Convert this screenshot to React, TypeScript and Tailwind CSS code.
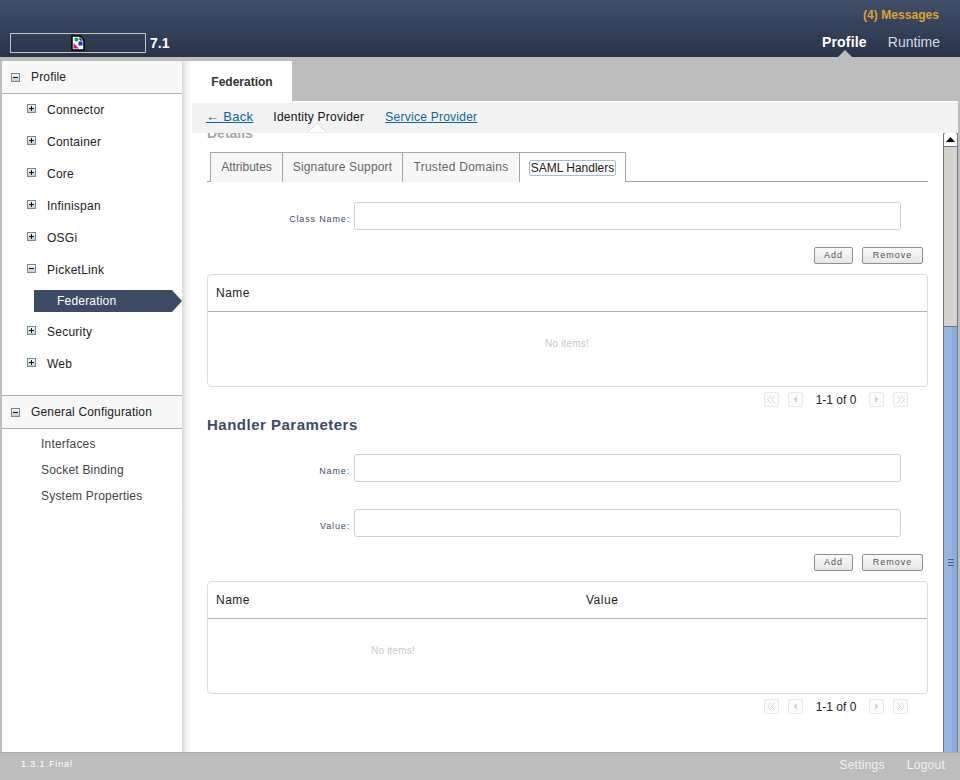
import React from "react";

function TreeIcon({ open, cls }: { open?: boolean; cls?: string }) {
  return (
    <svg width="9" height="9" viewBox="0 0 9 9" className={cls} shapeRendering="crispEdges">
      <defs>
        <linearGradient id="tg" x1="0" y1="0" x2="0" y2="1">
          <stop offset="0" stopColor="#f8f8f8" />
          <stop offset="1" stopColor="#d8c8b0" />
        </linearGradient>
      </defs>
      <rect x="0.5" y="0.5" width="8" height="8" fill="url(#tg)" stroke="#5f93ad" />
      <rect x="2" y="4" width="5" height="1" fill="#111" />
      {!open && <rect x="4" y="2" width="1" height="5" fill="#111" />}
    </svg>
  );
}

function TreeRow({ label, open }: { label: string; open?: boolean }) {
  return (
    <div className="flex h-[32px] items-center pl-[25px]">
      <TreeIcon open={open} cls="mb-[3px]" />
      <span className="ml-[11px] text-[12px] tracking-[0.25px] text-[#222]">{label}</span>
    </div>
  );
}

function SideHeader({ label, cls }: { label: string; cls?: string }) {
  return (
    <div className={"flex h-[33px] items-center bg-[#f7f7f7] border-b border-[#aeaeb4] pl-[9px] " + (cls ?? "")}>
      <TreeIcon open />
      <span className="ml-[11px] text-[12px] tracking-[0.17px] text-[#222]">{label}</span>
    </div>
  );
}

function Sidebar() {
  return (
    <div className="w-[180px] shrink-0 bg-white flex flex-col">
      <SideHeader label="Profile" />
      <div>
        <TreeRow label="Connector" />
        <TreeRow label="Container" />
        <TreeRow label="Core" />
        <TreeRow label="Infinispan" />
        <TreeRow label="OSGi" />
        <TreeRow label="PicketLink" open />
        <div className="h-[22px] w-[148px] ml-[32px] mt-[4px] mb-[4px] flex items-center pl-[23px] bg-[#3c4c66] text-white text-[12px] tracking-[0.2px] [clip-path:polygon(0_0,138px_0,148px_50%,138px_100%,0_100%)]">
          Federation
        </div>
        <TreeRow label="Security" />
        <TreeRow label="Web" />
      </div>
      <div className="mt-[15px] border-t border-[#aeaeb4]">
        <SideHeader label="General Configuration" />
      </div>
      <div className="pt-[2px] pl-[39px] text-[12px] tracking-[0.2px] text-[#444]">
        <div className="h-[26px] flex items-center">Interfaces</div>
        <div className="h-[26px] flex items-center">Socket Binding</div>
        <div className="h-[26px] flex items-center">System Properties</div>
      </div>
    </div>
  );
}

function ActionButtons() {
  return (
    <div className="flex justify-end gap-[9px] pr-[5px]">
      <button className="h-[17px] w-[39px] rounded-[2px] border border-[#8f8f8f] bg-gradient-to-b from-[#fafafa] to-[#e6e6e6] text-[9px] tracking-[1px] text-[#555]">Add</button>
      <button className="h-[17px] w-[61px] rounded-[2px] border border-[#8f8f8f] bg-gradient-to-b from-[#fafafa] to-[#e6e6e6] text-[9px] tracking-[1px] text-[#555]">Remove</button>
    </div>
  );
}

function Field({ label, cls }: { label: string; cls?: string }) {
  return (
    <div className={"flex items-center " + (cls ?? "")}>
      <div className="w-[143px] pt-[7px] text-right text-[9px] tracking-[0.85px] text-[#3c4c66]">{label}</div>
      <div className="ml-[4px] h-[28px] w-[547px] rounded-[3px] border border-[#cfcfcf] bg-white" />
    </div>
  );
}

function PagerBtn({ d }: { d: "first" | "prev" | "next" | "last" }) {
  return (
    <div className="h-[15px] w-[15px] rounded-[2px] border border-[#e8e8e8] bg-[#fbfbfb] flex items-center justify-center">
      <svg width="11" height="9" viewBox="0 0 11 9" fill="none">
        {d === "prev" && <path d="M7 1 L3.5 4.5 L7 8 Z" fill="#d4d4d4" />}
        {d === "next" && <path d="M4 1 L7.5 4.5 L4 8 Z" fill="#d4d4d4" />}
        {d === "first" && <path d="M5 1 L1.5 4.5 L5 8 M9 1 L5.5 4.5 L9 8" stroke="#d4d4d4" />}
        {d === "last" && <path d="M2 1 L5.5 4.5 L2 8 M6 1 L9.5 4.5 L6 8" stroke="#d4d4d4" />}
      </svg>
    </div>
  );
}

function Pager({ cls }: { cls?: string }) {
  return (
    <div className={"flex items-center h-[15px] pl-[557px] " + (cls ?? "")}>
      <PagerBtn d="first" />
      <div className="w-[9px]" />
      <PagerBtn d="prev" />
      <div className="w-[66px] text-center text-[12px] text-[#222]">1-1 of 0</div>
      <PagerBtn d="next" />
      <div className="w-[9px]" />
      <PagerBtn d="last" />
    </div>
  );
}

function DataTable({ children, emptyCls }: { children: React.ReactNode; emptyCls: string }) {
  return (
    <div className="h-[113px] w-[721px] rounded-[4px] border border-[#dedede] bg-white flex flex-col">
      <div className="h-[37px] border-b border-[#b0b0b0] flex items-center text-[12px] tracking-[0.5px] text-[#222] shrink-0">{children}</div>
      <div className={"flex-1 flex items-center pb-[12px] text-[10px] tracking-[0.2px] text-[#c8c8c8] " + emptyCls}>No items!</div>
    </div>
  );
}

function Scrollbar() {
  return (
    <div className="w-[15px] shrink-0 -mt-[1px] flex flex-col border-x border-[#6f7784] rounded-t-[3px] bg-[#94b6e3]">
      <div className="h-[15px] shrink-0 -mx-[1px] bg-white rounded-t-[3px] border border-[#6f7784] flex items-center justify-center">
        <svg width="9" height="5" viewBox="0 0 9 5"><path d="M4.5 0 L9 5 L0 5 Z" fill="#000" /></svg>
      </div>
      <div className="h-[180px] shrink-0 bg-[#d6d3cf] border-b border-[#6f7784]" />
      <div className="flex-1 flex items-center justify-center bg-gradient-to-r from-[#94b6e3] from-60% to-[#8bacdb] to-60%">
        <div className="mt-[45px] flex flex-col gap-[2px]">
          <div className="h-[1px] w-[6px] bg-[#4d5d78]" />
          <div className="h-[1px] w-[6px] bg-[#4d5d78]" />
          <div className="h-[1px] w-[6px] bg-[#4d5d78]" />
        </div>
      </div>
    </div>
  );
}

const inactiveTab = "h-[30px] bg-[#f7f7f7] border border-[#a5a5ad] border-b-0 flex items-center justify-center pb-[1px] text-[12px] text-[#666]";

function Content() {
  return (
    <div className="flex-1 min-w-0 overflow-hidden pl-[15px]">
      <div className="text-[14px] font-bold text-[#a8a8a8] h-[19px] -mt-[8px] leading-[16px]">Details</div>
      <div className="flex h-[30px] w-[721px] border-b border-[#a5a5ad] mt-[8px]">
        <div className={"ml-[3px] w-[73px] " + inactiveTab}>Attributes</div>
        <div className={"-ml-[1px] w-[121px] tracking-[0.16px] " + inactiveTab}>Signature Support</div>
        <div className={"-ml-[1px] w-[118px] tracking-[0.27px] " + inactiveTab}>Trusted Domains</div>
        <div className="-ml-[1px] h-[30px] w-[107px] bg-white border border-[#a5a5ad] border-b-0 flex items-center justify-center relative z-10">
          <span className="rounded-[2px] border border-[#a9bcd6] text-[12px] leading-[14px] text-[#222] px-[1px]">SAML Handlers</span>
        </div>
      </div>
      <Field label="Class Name:" cls="mt-[20px]" />
      <div className="mt-[17px] w-[721px]"><ActionButtons /></div>
      <div className="mt-[10px]">
        <DataTable emptyCls="justify-center pr-[1px]">
          <span className="ml-[8px]">Name</span>
        </DataTable>
      </div>
      <Pager cls="mt-[5px]" />
      <div className="mt-[8px] text-[15px] leading-[20px] tracking-[0.5px] font-bold text-[#3c4c66]">Handler Parameters</div>
      <Field label="Name:" cls="mt-[19px]" />
      <Field label="Value:" cls="mt-[27px]" />
      <div className="mt-[17px] w-[721px]"><ActionButtons /></div>
      <div className="mt-[10px]">
        <DataTable emptyCls="pl-[163px]">
          <span className="ml-[8px] w-[370px]">Name</span>
          <span>Value</span>
        </DataTable>
      </div>
      <Pager cls="mt-[5px]" />
    </div>
  );
}

export default function App() {
  return (
    <div className="relative h-[780px] w-[960px] overflow-hidden bg-[#bdbdbd] flex flex-col font-['Liberation_Sans',Arial,sans-serif]">
      <header className="h-[57px] shrink-0 bg-gradient-to-b from-[#414f6b] to-[#29344a] relative">
        <div className="flex justify-end pt-[8px] pr-[21px] text-[12px] tracking-[0.05px] font-bold text-[#dfa12e] leading-[15px]">(4) Messages</div>
        <div className="flex items-center justify-between pl-[10px] pr-[20px] mt-[10px] h-[20px]">
          <div className="flex items-center">
            <div className="h-[20px] w-[136px] border border-[#c4c4c4] flex items-center justify-center">
              <svg width="14" height="16" viewBox="0 0 14 16">
                <path d="M1 1 H9 L13 5 V15 H1 Z" fill="#fff" stroke="#000" strokeWidth="1.5" />
                <path d="M9 1 V5 H13 Z" fill="#c8c8c8" stroke="#000" />
                <circle cx="5.5" cy="4.5" r="2" fill="#00a040" />
                <rect x="7.5" y="6.5" width="4" height="4" fill="#1a2ae0" />
                <path d="M2.5 13.5 V8 L8 13.5 Z" fill="#e000a0" />
              </svg>
            </div>
            <span className="ml-[4px] text-[14px] font-bold text-white">7.1</span>
          </div>
          <div className="flex items-center gap-[21px] text-[14px] pb-[2px]">
            <span className="font-bold tracking-[0.2px] text-white">Profile</span>
            <span className="text-[#d6dae2]">Runtime</span>
          </div>
        </div>
        <div className="absolute left-[838px] bottom-0 h-0 w-0 border-x-[7px] border-b-[7px] border-x-transparent border-b-[#bdbdbd]" />
      </header>
      <div className="flex flex-1 min-h-0 pt-[4px] pl-[2px] pr-[2px]">
        <Sidebar />
        <div className="w-[10px] shrink-0 bg-gradient-to-r from-[#d9d9d9] via-[#f4f4f4] to-white" />
        <div className="flex-1 min-w-0 flex flex-col">
          <div className="h-[40px] shrink-0 flex">
            <div className="w-[100px] bg-white flex items-center justify-center pt-[2px] text-[12px] font-bold text-[#333]">Federation</div>
          </div>
          <div className="flex-1 min-h-0 bg-white flex flex-col pt-[2px]">
            <div className="relative z-10 h-[30px] shrink-0 bg-[#f2f2f2] flex items-center pl-[14px] pb-[2px] text-[12px] tracking-[0.25px]">
              <a className="underline text-[#0a6795] text-[13px] tracking-[0.3px]">← Back</a>
              <span className="ml-[20px] text-[#111]">Identity Provider</span>
              <a className="ml-[21px] underline text-[#0a6795]">Service Provider</a>
              <svg className="absolute left-[115px] bottom-0" width="20" height="10" viewBox="0 0 20 10">
                <path d="M0 10 L10 0 L20 10 Z" fill="#fff" stroke="#dcdcdc" />
              </svg>
            </div>
            <div className="flex-1 min-h-0 flex">
              <Content />
              <Scrollbar />
            </div>
          </div>
        </div>
      </div>
      <footer className="h-[28px] shrink-0 border-t border-[#a5a8b0] flex items-center justify-between pl-[21px] pr-[15px] pb-[4px] text-white">
        <span className="text-[9px] tracking-[0.9px]">1.3.1.Final</span>
        <div className="flex gap-[22px] text-[12px] tracking-[0.25px] text-[#f2f2f2]">
          <span>Settings</span>
          <span>Logout</span>
        </div>
      </footer>
    </div>
  );
}
